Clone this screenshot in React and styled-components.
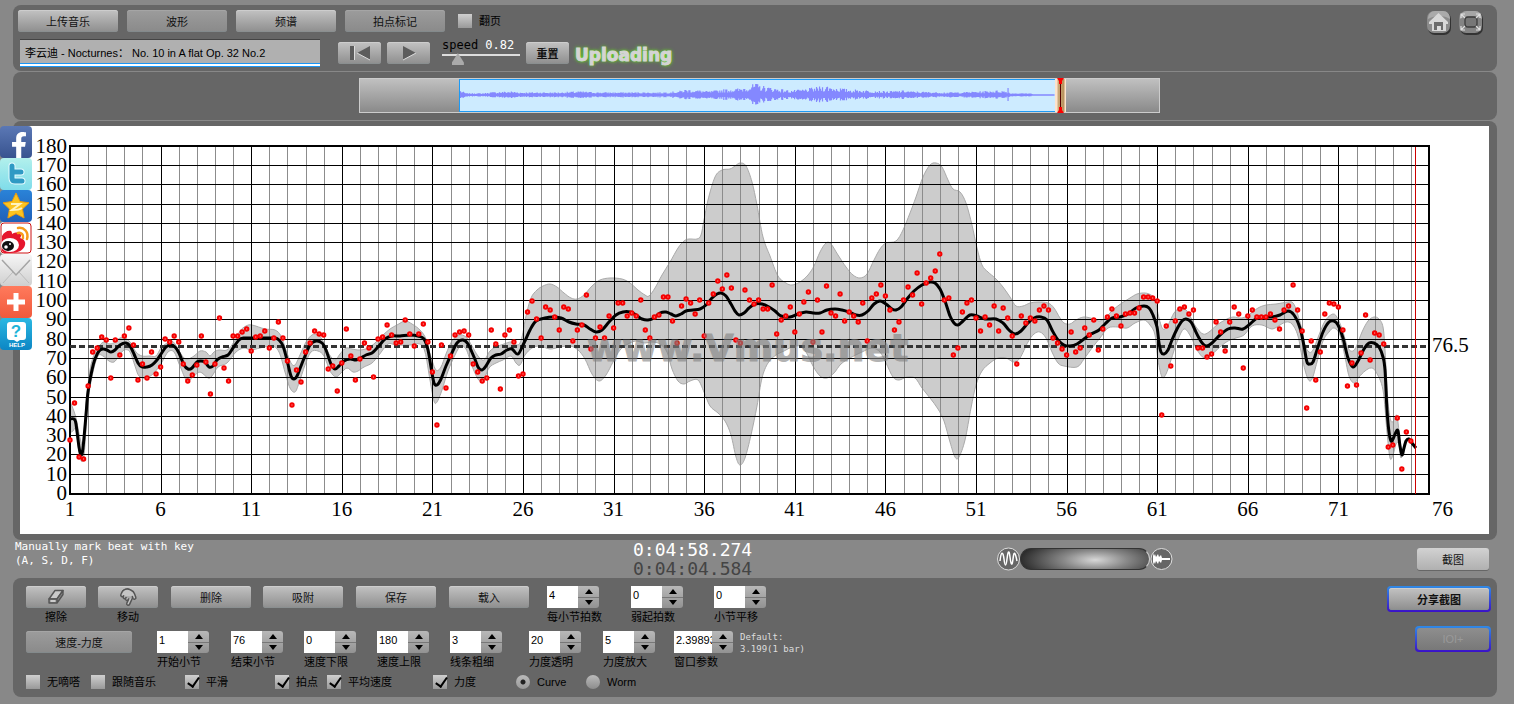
import React, { useState } from "react";
import styled, { createGlobalStyle, css } from "styled-components";
import { FaFacebookF } from "react-icons/fa";
import { Pointer } from "lucide-react";

// tempo of every beat, four beats to the bar, as a height on the chart
const beats = [
  440, 403, 457, 459, 386, 352, 348, 337, 340, 378, 340, 355, 336, 328, 345, 380, 364, 378, 352, 374,
  367, 339, 342, 336, 342, 364, 381, 375, 365, 336, 362, 394, 364, 318, 368, 381, 336, 336, 332, 329,
  351, 337, 336, 331, 348, 338, 322, 338, 361, 405, 370, 382, 352, 343, 331, 334, 335, 369, 366, 391,
  363, 329, 356, 380, 359, 343, 348, 377, 339, 337, 325, 335, 343, 342, 320, 334, 346, 334, 324, 342,
  372, 425, 345, 388, 356, 335, 332, 331, 335, 364, 372, 381, 378, 330, 344, 389, 335, 330, 342, 376,
  374, 312, 301, 319, 338, 307, 310, 317, 330, 307, 309, 341, 330, 325, 295, 349, 338, 327, 338, 316,
  328, 303, 303, 316, 313, 316, 300, 330, 338, 317, 315, 297, 297, 321, 343, 306, 299, 303, 314, 300,
  336, 303, 294, 281, 289, 275, 288, 340, 343, 290, 300, 304, 300, 309, 309, 285, 334, 320, 316, 307,
  332, 314, 302, 292, 342, 300, 332, 286, 313, 316, 294, 321, 312, 316, 322, 303, 341, 298, 294, 285,
  296, 310, 330, 322, 300, 287, 295, 273, 304, 283, 278, 271, 254, 300, 298, 355, 348, 312, 303, 300,
  318, 331, 317, 325, 306, 331, 308, 318, 336, 364, 316, 323, 318, 321, 310, 306, 310, 338, 343, 349,
  355, 332, 352, 348, 328, 335, 320, 350, 329, 317, 309, 316, 326, 314, 313, 313, 308, 297, 297, 298,
  301, 415, 326, 366, 321, 309, 307, 314, 310, 348, 348, 357, 354, 322, 332, 351, 322, 307, 314, 368,
  316, 310, 317, 317, 317, 314, 320, 329, 310, 306, 285, 310, 331, 408, 341, 380, 352, 314, 303, 304,
  307, 330, 386, 363, 385, 353, 315, 360, 333, 335, 344, 447, 445, 418, 469, 432, 441,
];

// x, y, x, y ...
const curve = [
  70, 419, 74, 419, 76, 424, 79, 447, 81, 455, 83, 448, 86, 415, 88, 392, 92, 370, 95, 359, 99, 351,
  103, 349, 107, 350, 111, 352, 115, 350, 120, 345, 126, 343, 130, 346, 134, 354, 138, 363, 142, 367,
  147, 367, 152, 365, 157, 360, 161, 354, 166, 347, 171, 345, 175, 347, 179, 353, 184, 365, 188, 369,
  192, 368, 197, 362, 201, 361, 205, 362, 209, 367, 213, 366, 217, 360, 222, 357, 228, 355, 233, 348,
  239, 340, 244, 338, 251, 338, 265, 338, 275, 338, 279, 340, 283, 346, 287, 360, 291, 376, 294, 379,
  297, 376, 301, 366, 305, 356, 310, 345, 316, 341, 322, 343, 326, 350, 331, 364, 335, 369, 339, 366,
  344, 361, 350, 359, 356, 360, 361, 358, 366, 355, 372, 353, 378, 347, 385, 339, 392, 336, 400, 336,
  410, 335, 418, 336, 424, 339, 428, 350, 432, 373, 434, 383, 437, 385, 441, 379, 446, 366, 451, 355,
  457, 343, 463, 340, 468, 344, 474, 357, 478, 367, 482, 370, 486, 366, 491, 358, 496, 355, 501, 354,
  507, 350, 512, 349, 518, 354, 524, 343, 530, 330, 536, 321, 545, 318, 553, 317, 561, 318, 569, 322,
  576, 324, 584, 325, 590, 329, 596, 332, 602, 330, 609, 322, 616, 315, 623, 312, 630, 312, 636, 315,
  642, 319, 648, 320, 654, 318, 660, 313, 666, 312, 671, 314, 676, 316, 681, 314, 686, 311, 693, 310,
  700, 309, 706, 305, 712, 298, 717, 294, 721, 293, 726, 296, 731, 304, 735, 311, 739, 315, 744, 313,
  749, 308, 755, 304, 762, 304, 769, 307, 775, 311, 781, 316, 790, 317, 798, 314, 806, 312, 813, 313,
  820, 313, 827, 310, 835, 309, 842, 310, 849, 312, 856, 315, 862, 315, 868, 311, 874, 304, 880, 301,
  886, 304, 892, 309, 896, 310, 901, 307, 907, 299, 914, 291, 922, 285, 930, 282, 935, 283, 940, 289,
  945, 301, 950, 316, 954, 323, 958, 325, 963, 321, 970, 315, 977, 316, 985, 319, 996, 319, 1003, 323,
  1009, 330, 1015, 334, 1021, 331, 1028, 323, 1034, 318, 1041, 317, 1047, 320, 1052, 330, 1058, 340,
  1064, 345, 1070, 346, 1077, 344, 1084, 339, 1091, 334, 1099, 330, 1105, 324, 1112, 318, 1120, 317,
  1128, 314, 1136, 308, 1144, 306, 1149, 308, 1153, 315, 1157, 327, 1159, 343, 1161, 352, 1164, 354,
  1168, 350, 1172, 340, 1177, 329, 1182, 321, 1186, 319, 1191, 322, 1195, 330, 1199, 338, 1203, 344,
  1207, 346, 1212, 343, 1220, 335, 1228, 329, 1235, 328, 1243, 329, 1250, 324, 1257, 318, 1264, 317,
  1272, 317, 1280, 315, 1288, 311, 1294, 315, 1300, 328, 1304, 346, 1307, 362, 1310, 364, 1313, 362,
  1317, 350, 1323, 332, 1329, 322, 1334, 321, 1338, 325, 1343, 338, 1348, 358, 1353, 367, 1358, 361,
  1364, 349, 1369, 343, 1374, 343, 1379, 347, 1383, 357, 1385, 370, 1387, 410, 1389, 432, 1391, 441,
  1393, 439, 1396, 432, 1398, 431, 1400, 446, 1402, 455, 1404, 448, 1406, 441, 1409, 439, 1412, 443,
  1416, 448,
];

const loud = [
  70, 402, 72, 406, 76, 418, 80, 438, 83, 443, 86, 405, 90, 370, 95, 352, 100, 345, 104, 342, 110, 344,
  115, 342, 120, 338, 125, 338, 130, 342, 136, 352, 142, 356, 150, 356, 156, 356, 161, 348, 167, 343,
  172, 341, 177, 347, 183, 357, 188, 359, 194, 356, 200, 351, 206, 352, 210, 356, 214, 352, 219, 350,
  227, 350, 234, 342, 240, 331, 246, 326, 252, 325, 265, 329, 275, 330, 281, 336, 286, 350, 291, 363,
  295, 365, 300, 355, 306, 342, 312, 335, 318, 335, 323, 341, 329, 354, 335, 360, 340, 354, 346, 348,
  352, 349, 360, 350, 368, 348, 375, 343, 383, 335, 390, 329, 397, 325, 405, 321, 412, 324, 420, 330,
  426, 339, 431, 357, 436, 370, 441, 367, 446, 354, 452, 341, 459, 335, 466, 337, 472, 346, 478, 356,
  484, 360, 490, 351, 496, 347, 504, 344, 511, 342, 518, 345, 522, 337, 526, 316, 531, 298, 537, 290,
  543, 286, 550, 284, 557, 287, 564, 293, 571, 298, 577, 299, 584, 295, 592, 286, 600, 280, 610, 278,
  622, 279, 630, 283, 638, 290, 645, 295, 649, 296, 655, 288, 662, 275, 670, 262, 678, 248, 684, 241,
  689, 239, 697, 239, 701, 235, 704, 220, 708, 200, 715, 177, 722, 170, 730, 169, 735, 166, 740, 163,
  746, 166, 752, 182, 757, 205, 763, 237, 770, 256, 778, 276, 786, 283, 792, 285, 800, 282, 808, 275,
  814, 266, 820, 252, 826, 243, 831, 244, 838, 255, 846, 267, 853, 275, 860, 278, 867, 274, 874, 260,
  880, 249, 886, 243, 896, 241, 903, 230, 910, 213, 916, 197, 923, 177, 930, 165, 936, 163, 942, 167,
  948, 180, 953, 189, 960, 192, 966, 203, 972, 225, 977, 248, 982, 265, 988, 272, 995, 278, 1003, 287,
  1010, 297, 1016, 306, 1023, 306, 1030, 303, 1038, 302, 1048, 303, 1054, 308, 1060, 318, 1064, 323,
  1070, 324, 1076, 320, 1084, 317, 1094, 319, 1100, 321, 1106, 317, 1114, 309, 1122, 303, 1130, 298,
  1137, 294, 1145, 293, 1151, 295, 1155, 300, 1159, 318, 1163, 329, 1168, 325, 1174, 313, 1180, 308,
  1186, 310, 1191, 318, 1196, 327, 1203, 334, 1209, 332, 1217, 325, 1225, 320, 1233, 317, 1242, 318,
  1250, 314, 1258, 308, 1266, 305, 1276, 304, 1288, 302, 1293, 303, 1297, 312, 1302, 330, 1305, 345,
  1309, 352, 1313, 350, 1319, 335, 1325, 321, 1333, 314, 1338, 319, 1343, 332, 1348, 348, 1353, 351,
  1357, 345, 1362, 332, 1368, 321, 1374, 317, 1379, 319, 1383, 327, 1385, 350, 1388, 402, 1391, 421,
  1394, 420, 1397, 416, 1400, 441, 1402, 451, 1405, 442, 1409, 438, 1416, 448,
];

const soft = [
  70, 433, 73, 431, 76, 430, 80, 458, 84, 455, 88, 402, 93, 372, 98, 356, 103, 356, 109, 361, 114, 362,
  119, 356, 124, 350, 130, 352, 135, 366, 139, 376, 146, 378, 154, 373, 162, 362, 168, 352, 174, 352,
  180, 366, 187, 381, 193, 377, 200, 372, 208, 378, 212, 376, 218, 367, 227, 363, 236, 352, 244, 348,
  251, 350, 260, 348, 272, 346, 279, 352, 285, 372, 290, 388, 295, 392, 299, 383, 305, 365, 311, 352,
  318, 351, 324, 356, 330, 371, 336, 377, 341, 373, 347, 368, 353, 372, 358, 371, 364, 367, 372, 363,
  379, 355, 388, 344, 396, 345, 410, 345, 420, 344, 425, 352, 430, 380, 434, 401, 437, 402, 442, 390,
  448, 371, 455, 355, 460, 347, 466, 349, 472, 366, 478, 379, 483, 381, 489, 368, 496, 363, 503, 360,
  511, 356, 516, 363, 520, 365, 525, 355, 532, 348, 540, 346, 550, 349, 560, 347, 570, 346, 578, 350,
  585, 359, 592, 374, 599, 381, 606, 375, 613, 362, 620, 350, 628, 344, 636, 341, 644, 343, 652, 342,
  660, 344, 667, 352, 672, 369, 678, 381, 684, 384, 690, 381, 698, 380, 704, 392, 710, 406, 718, 413,
  725, 421, 731, 435, 736, 457, 740, 465, 745, 458, 751, 435, 757, 406, 762, 378, 768, 363, 776, 355,
  784, 351, 792, 347, 800, 346, 806, 352, 813, 366, 820, 376, 827, 378, 834, 373, 841, 364, 850, 358,
  862, 352, 872, 348, 880, 352, 886, 363, 893, 377, 899, 380, 907, 377, 915, 378, 922, 388, 930, 398,
  938, 409, 944, 421, 950, 442, 955, 457, 959, 457, 965, 440, 971, 408, 976, 385, 982, 371, 990, 363,
  998, 358, 1006, 358, 1014, 362, 1020, 358, 1028, 342, 1034, 334, 1040, 332, 1046, 338, 1052, 352,
  1058, 363, 1064, 366, 1077, 367, 1084, 359, 1092, 348, 1100, 338, 1108, 328, 1118, 327, 1127, 328,
  1135, 323, 1144, 320, 1150, 325, 1155, 335, 1158, 360, 1162, 377, 1166, 374, 1171, 360, 1177, 342,
  1184, 329, 1191, 337, 1197, 350, 1204, 358, 1210, 356, 1220, 347, 1228, 341, 1236, 338, 1244, 335,
  1252, 326, 1262, 325, 1272, 329, 1280, 325, 1286, 322, 1292, 324, 1298, 336, 1303, 362, 1308, 379,
  1312, 379, 1317, 362, 1323, 341, 1329, 332, 1334, 328, 1340, 335, 1345, 357, 1349, 376, 1354, 383,
  1359, 377, 1365, 371, 1371, 368, 1376, 372, 1383, 390, 1387, 432, 1390, 458, 1393, 455, 1396, 444,
  1399, 444, 1401, 458, 1405, 446, 1409, 440, 1416, 448,
];

const pairs = (flat) => {
  const out = [];
  for (let i = 0; i < flat.length; i += 2) out.push([flat[i], flat[i + 1]]);
  return out;
};

const smooth = (pts) => {
  let d = "";
  for (let i = 0; i < pts.length - 1; i++) {
    const p0 = pts[i - 1] || pts[i];
    const p1 = pts[i];
    const p2 = pts[i + 1];
    const p3 = pts[i + 2] || p2;
    const c1 = [p1[0] + (p2[0] - p0[0]) / 6, p1[1] + (p2[1] - p0[1]) / 6];
    const c2 = [p2[0] - (p3[0] - p1[0]) / 6, p2[1] - (p3[1] - p1[1]) / 6];
    d += `C${c1[0].toFixed(1)} ${c1[1].toFixed(1)} ${c2[0].toFixed(1)} ${c2[1].toFixed(1)} ${p2[0]} ${p2[1]}`;
  }
  return d;
};

const linePath = (flat) => `M${flat[0]} ${flat[1]}${smooth(pairs(flat))}`;

const bandPath = () => {
  const back = pairs(soft).reverse();
  return `${linePath(loud)}L${back[0][0]} ${back[0][1]}${smooth(back)}Z`;
};

const barX = (bar) => 70 + (bar - 1) * 18.12;
const bpmY = (bpm) => 494 - bpm * 1.93;

const range = (from, to, step) => {
  const out = [];
  for (let n = from; n <= to; n += step) out.push(n);
  return out;
};

const TempoChart = () => (
  <ChartSvg viewBox="20 126 1469 408" role="img" aria-label="tempo curve">
    <path d={bandPath()} fill="#cccccc" stroke="#aaaaaa" />
    <g shapeRendering="crispEdges">
      {range(1, 76, 1).map((bar) => (
        <line
          key={bar}
          x1={Math.round(barX(bar)) + 0.5}
          x2={Math.round(barX(bar)) + 0.5}
          y1="147"
          y2="494"
          stroke={bar % 5 === 1 ? "#000" : "#8c8c8c"}
        />
      ))}
      {range(0, 180, 10).map((bpm) => (
        <line
          key={bpm}
          x1="70"
          x2="1429"
          y1={Math.round(bpmY(bpm)) - 0.5}
          y2={Math.round(bpmY(bpm)) - 0.5}
          stroke="#000"
        />
      ))}
      <rect x="70" y="146" width="1359" height="348" fill="none" stroke="#000" strokeWidth="2" />
    </g>
    <line x1="70" x2="1429" y1="346.5" y2="346.5" stroke="#333" strokeWidth="3" strokeDasharray="6 3" />
    <path d={linePath(curve)} fill="none" stroke="#000" strokeWidth="3" strokeLinejoin="round" />
    {beats.map((y, i) => (
      <circle key={i} cx={70 + i * 4.53} cy={y} r="1.7" fill="#ff8080" stroke="#f50000" strokeWidth="2" />
    ))}
    <line x1="1415.5" x2="1415.5" y1="147" y2="494" stroke="#c00" shapeRendering="crispEdges" />
    <Watermark x="587" y="361">www.Vmus.net</Watermark>
    {range(0, 180, 10).map((bpm) => (
      <AxisText key={bpm} x="67" y={Math.round(bpmY(bpm)) + 6} textAnchor="end">{bpm}</AxisText>
    ))}
    {range(1, 71, 5).map((bar) => (
      <AxisText key={bar} x={barX(bar)} y="516" textAnchor="middle">{bar}</AxisText>
    ))}
    <AxisText x="1432" y="516">76</AxisText>
    <AxisText x="1432" y="352">76.5</AxisText>
  </ChartSvg>
);

// loudness envelope of the recording: [x, half height]
const envelope = [
  [0, 4], [6, 1], [24, 1], [30, 2], [50, 3], [60, 2], [100, 2], [118, 3], [140, 2], [200, 2], [218, 3],
  [226, 5], [240, 4], [250, 3], [262, 5], [280, 6], [296, 11], [306, 8], [318, 6], [330, 4], [344, 5],
  [366, 9], [376, 7], [390, 5], [410, 4], [430, 3], [445, 4], [452, 3], [480, 2], [500, 2], [540, 4],
  [548, 3], [552, 1], [572, 1], [574, 0], [596, 0],
];

const wavePath = () => {
  let d = "";
  let seed = 7;
  let k = 0;
  for (let x = 0; x < 596; x++) {
    while (envelope[k + 1][0] < x) k++;
    const [x0, a0] = envelope[k];
    const [x1, a1] = envelope[k + 1];
    const amp = a0 + ((a1 - a0) * (x - x0)) / (x1 - x0);
    seed = (seed * 1103515245 + 12345) % 2147483648;
    const h = 0.8 + amp * (0.3 + (0.7 * seed) / 2147483648);
    d += `M${x + 0.5} ${(15 - h).toFixed(1)}V${(15 + h * 0.85).toFixed(1)}`;
  }
  return `${d}M549.5 8V21`;
};

const EraserIcon = () => (
  <svg width="18" height="16" viewBox="0 0 18 16" fill="none" stroke="#555" strokeWidth="1.4" strokeLinejoin="round">
    <path d="M8 1.500h8L10 10H2z" fill="#c9c9c9" />
    <path d="M2 10h8v4H2zM16 1.500L10 10v4l6-8.500z" fill="#8a8a8a" />
    <path d="M3.500 11h5v2h-5z" fill="#ccc" stroke="none" />
  </svg>
);

const HomeIcon = () => (
  <svg width="26" height="26" viewBox="0 0 26 26">
    <rect x="2" y="2" width="23" height="23" rx="7" fill="#333" />
    <rect x="1" y="1" width="23" height="22" rx="7" fill="#8b8b8b" />
    <path d="M2 9c0-5 3-8 7-8h8c4 0 7 3 7 8-6-4-15-4-22 0z" fill="#aaa" />
    <path d="M12.500 3L22 12v2h-2v7H6v-7H3v-2z" fill="#d8d8d8" />
    <path d="M8 12h9v8h-2v-4h-4v4H8z" fill="#6c6c6c" />
    <path d="M11 16h3v5h-3z" fill="#ddd" />
  </svg>
);

const FullIcon = () => (
  <svg width="26" height="26" viewBox="0 0 26 26">
    <rect x="2" y="2" width="23" height="23" rx="7" fill="#333" />
    <rect x="1" y="1" width="23" height="22" rx="7" fill="#848484" />
    <path d="M2 9c0-5 3-8 7-8h8c4 0 7 3 7 8-6-4-15-4-22 0z" fill="#a6a6a6" />
    <rect x="7" y="7" width="12" height="10" rx="3" fill="#777" stroke="#3c3c3c" strokeWidth="1.300" />
    <path d="M3 8V4h4M3 4l4 4M22 8V4h-4M22 4l-4 4M3 16v4h4M3 20l4-4M22 16v4h-4M22 20l-4-4" fill="none" stroke="#ddd" strokeWidth="1.200" />
  </svg>
);

const TwitterIcon = () => (
  <svg width="32" height="32" viewBox="0 0 32 32" fill="none" strokeLinecap="round" strokeLinejoin="round">
    <path d="M12 8v12c0 2 1 3 3 3h7M12 14h9" stroke="#e6fbff" strokeWidth="7" />
    <path d="M12 8v12c0 2 1 3 3 3h7M12 14h9" stroke="#2f9ac4" strokeWidth="5" />
  </svg>
);

const QzoneIcon = () => (
  <svg width="32" height="32" viewBox="0 0 32 32">
    <path d="M16 3l4 8.500 9 1.300-6.500 6.200 1.600 9L16 23.700 7.900 28l1.600-9L3 12.800l9-1.300z" fill="#fcc420" stroke="#e89a10" />
    <path d="M11 14h9l-8 6c4 0 7 0 10-2" fill="none" stroke="#fff3c0" strokeWidth="2" />
  </svg>
);

const WeiboIcon = () => (
  <svg width="32" height="32" viewBox="0 0 32 32">
    <rect x="1" y="1" width="30" height="30" rx="3" fill="#fff" stroke="#c11" />
    <path d="M2 14c2-4 6-6 9-5 1 1 1 2 1 3 4-2 8-2 9 1 0 1 0 2-1 3 4 1 6 4 5 7-1 5-7 8-14 8H4l-2-2z" fill="#e6162d" />
    <ellipse cx="10" cy="23" rx="9" ry="7" fill="#fff" />
    <ellipse cx="8" cy="24" rx="6" ry="5" fill="#111" />
    <circle cx="6" cy="25" r="1.800" fill="#fff" />
    <circle cx="10" cy="22" r="1" fill="#fff" />
    <path d="M18 6c6-1 11 4 9 11M18 11c3-1 6 2 5 5" fill="none" stroke="#f79a1c" strokeWidth="2.500" strokeLinecap="round" />
  </svg>
);

const MailIcon = () => (
  <svg width="32" height="32" viewBox="0 0 32 32" fill="none">
    <path d="M3 29l10-11M29 29L19 18" stroke="#bbb" />
    <path d="M2 6l14 15L30 6" stroke="#a5a5a5" strokeWidth="1.500" />
  </svg>
);

const PlusIcon = () => (
  <svg width="32" height="32" viewBox="0 0 32 32">
    <path d="M13.500 7h5v6.500H25v5h-6.500V25h-5v-6.500H7v-5h6.500z" fill="#fff" />
  </svg>
);

const HelpIcon = () => (
  <svg width="32" height="32" viewBox="0 0 32 32">
    <path d="M10 4h13a3 3 0 013 3v12a3 3 0 01-3 3h-3l-3 2-3-2h-4a3 3 0 01-3-3V7a3 3 0 013-3z" fill="#fff" />
    <text x="16" y="19" textAnchor="middle" fontFamily="Liberation Sans, sans-serif" fontSize="17" fontWeight="bold" fill="#1fb4d8">?</text>
    <text x="17" y="29" textAnchor="middle" fontFamily="Liberation Sans, sans-serif" fontSize="6" fontWeight="bold" fill="#fff">HELP</text>
  </svg>
);

const shares = [
  { name: "Facebook", top: "#5b78b5", bottom: "#38538f", icon: <FaFacebookF size={26} color="#fff" /> },
  { name: "Twitter", top: "#b2f0ec", bottom: "#7fdcea", icon: <TwitterIcon /> },
  { name: "Qzone", top: "#2a83d8", bottom: "#2060b8", icon: <QzoneIcon /> },
  { name: "Weibo", top: "#ffffff", bottom: "#ffffff", icon: <WeiboIcon /> },
  { name: "Mail", top: "#f6f6f6", bottom: "#cfcfcf", icon: <MailIcon /> },
  { name: "More", top: "#ff7a5c", bottom: "#f0593c", icon: <PlusIcon /> },
  { name: "Help", top: "#2ab8e2", bottom: "#0c86c4", icon: <HelpIcon /> },
];

const Check = ({ label, checked }) => (
  <Tick>
    <Box type="checkbox" defaultChecked={checked} />
    {label}
  </Tick>
);

const Stepper = ({ label, start, wide }) => {
  const [value, setValue] = useState(start);
  const step = (by) => setValue(String(Number(value) + by));
  return (
    <Field $left>
      <Spin>
        <NumberBox $wide={wide} aria-label={label} value={value} onChange={(e) => setValue(e.target.value)} />
        <Arrows>
          <Arrow type="button" aria-label={`${label} +`} onClick={() => step(1)}>
            <svg width="8" height="5" viewBox="0 0 8 5"><path d="M0 5l4-5 4 5z" /></svg>
          </Arrow>
          <Arrow type="button" aria-label={`${label} -`} onClick={() => step(-1)}>
            <svg width="8" height="5" viewBox="0 0 8 5"><path d="M0 0l4 5 4-5z" /></svg>
          </Arrow>
        </Arrows>
      </Spin>
      <Caption>{label}</Caption>
    </Field>
  );
};

const App = () => {
  const [mode, setMode] = useState("curve");

  return (
    <Page>
      <GlobalStyle />

      <TopPanel>
        <Tools>
          <ButtonRow>
            <Button $w={100}>上传音乐</Button>
            <Button $w={100} $dim>波形</Button>
            <Button $w={100}>频谱</Button>
            <Button $w={100} $dim>拍点标记</Button>
            <FlipWrap><Check label="翻页" /></FlipWrap>
          </ButtonRow>
          <PlayRow>
            <Track>
              <TrackName aria-label="track" defaultValue="李云迪 - Nocturnes： No. 10 in A flat Op. 32 No.2" />
              <TrackLoaded />
            </Track>
            <Button $w={43} aria-label="back to start">
              <svg width="22" height="18" viewBox="0 0 22 18"><path d="M1 2h4v14H1zM21 2v14L8 9z" fill="#5c5c5c" /><path d="M5.500 2v14M8 9l13 7" stroke="#ddd" fill="none" /></svg>
            </Button>
            <Button $w={43} aria-label="play">
              <svg width="18" height="18" viewBox="0 0 18 18"><path d="M3 2v14l13-7z" fill="#5c5c5c" /><path d="M3 16l13-7" stroke="#ddd" /></svg>
            </Button>
            <Speed>
              <SpeedLabel htmlFor="speed">speed <b>0.82</b></SpeedLabel>
              <SpeedRange id="speed" type="range" min="0.7" max="1.5" step="0.01" defaultValue="0.82" />
            </Speed>
            <Button $w={43} $bold>重置</Button>
            <Uploading>Uploading</Uploading>
          </PlayRow>
        </Tools>
        <Corner>
          <IconButton aria-label="home"><HomeIcon /></IconButton>
          <IconButton aria-label="full screen"><FullIcon /></IconButton>
        </Corner>
      </TopPanel>

      <WavePanel>
        <WaveSpace $grow={337} />
        <Overview>
          <Outside $grow={100} />
          <Selection>
            <svg width="100%" height="31" viewBox="0 0 596 31" preserveAspectRatio="none">
              <path d={wavePath()} stroke="#8488ff" strokeWidth="1.2" fill="none" />
            </svg>
          </Selection>
          <Handle>
            <svg width="11" height="35" viewBox="0 0 11 35">
              <path d="M5.500 0v35" stroke="#500" />
              <path d="M2 0h7l-2 3v3H4V3zM2 35h7l-2-3v-3H4v3z" fill="#f00" />
            </svg>
          </Handle>
          <Outside $grow={94} />
        </Overview>
        <WaveSpace $grow={328} />
      </WavePanel>

      <ChartPanel>
        <TempoChart />
      </ChartPanel>

      <Status>
        <Hint>Manually mark beat with key<br />(A, S, D, F)</Hint>
        <Clock>0:04:58.274<span>0:04:04.584</span></Clock>
        <Zoom>
          <svg width="23" height="24" viewBox="0 0 23 24" fill="#666" stroke="#ddd">
            <circle cx="11.500" cy="12" r="11" />
            <path d="M3 14C4 4 6 4 7 12s2 8 3 0 2-10 3-2 2 10 3 2 2-8 4 2" fill="none" stroke="#fff" strokeWidth="1.500" />
          </svg>
          <ZoomRange type="range" aria-label="zoom" />
          <svg width="23" height="24" viewBox="0 0 23 24" fill="#666" stroke="#ddd">
            <circle cx="11.500" cy="12" r="10.500" />
            <path d="M3 6l1 3 1-2 1 3 2-3 1 3 2-2 1 3h8v2h-8l-1 3-2-2-1 3-2-3-1 3-1-2-1 3z" fill="#fff" stroke="none" />
          </svg>
        </Zoom>
        <Button $w={72} $light>截图</Button>
      </Status>

      <BottomPanel>
        <Settings>
          <Row $cols="72px 73px 92px 93px 93px 98px 84px 83px 52px">
            <Field>
              <Button $w={60} aria-label="擦除"><EraserIcon /></Button>
              <Caption>擦除</Caption>
            </Field>
            <Field>
              <Button $w={60} aria-label="移动"><HandIcon size={18} /></Button>
              <Caption>移动</Caption>
            </Field>
            <Button $w={80}>删除</Button>
            <Button $w={80}>吸附</Button>
            <Button $w={80}>保存</Button>
            <Button $w={80}>载入</Button>
            <Stepper label="每小节拍数" start="4" />
            <Stepper label="弱起拍数" start="0" />
            <Stepper label="小节平移" start="0" />
          </Row>
          <Row $cols="131px 74px 73px 73px 73px 79px 74px 71px 66px 90px">
            <Button $w={106} $dim>速度-力度</Button>
            <Stepper label="开始小节" start="1" />
            <Stepper label="结束小节" start="76" />
            <Stepper label="速度下限" start="0" />
            <Stepper label="速度上限" start="180" />
            <Stepper label="线条粗细" start="3" />
            <Stepper label="力度透明" start="20" />
            <Stepper label="力度放大" start="5" />
            <Stepper label="窗口参数" start="2.39893" wide />
            <Default>Default:<br />3.199(1 bar)</Default>
          </Row>
          <Row $cols="65px 94px 90px 52px 106px 83px 70px 60px">
            <Check label="无嘀嗒" />
            <Check label="跟随音乐" />
            <Check label="平滑" checked />
            <Check label="拍点" checked />
            <Check label="平均速度" checked />
            <Check label="力度" checked />
            <Tick>
              <Dot type="radio" name="mode" checked={mode === "curve"} onChange={() => setMode("curve")} />
              Curve
            </Tick>
            <Tick>
              <Dot type="radio" name="mode" checked={mode === "worm"} onChange={() => setMode("worm")} />
              Worm
            </Tick>
          </Row>
        </Settings>
        <ShareColumn>
          <Ring><Button $w={100} $bold>分享截图</Button></Ring>
          <Ring><Button $w={72} disabled>IOI+</Button></Ring>
        </ShareColumn>
      </BottomPanel>

      <ShareBar>
        {shares.map((s) => (
          <ShareLink key={s.name} href="#" aria-label={s.name} $top={s.top} $bottom={s.bottom} $low={s.name === "Facebook"}>
            {s.icon}
          </ShareLink>
        ))}
      </ShareBar>
    </Page>
  );
};

const sans = `"Liberation Sans", "Noto Sans CJK SC", sans-serif`;
const mono = `"DejaVu Sans Mono", monospace`;

const GlobalStyle = createGlobalStyle`
  * {
    box-sizing: border-box;
  }
  body {
    margin: 0;
    background: #888;
    color: #000;
    font-family: ${sans};
    font-size: 11px;
  }
  button, input {
    font-family: inherit;
    font-size: 11px;
    margin: 0;
  }
`;

const Page = styled.div`
  position: relative;
  min-width: 1200px;
  padding: 5px 17px 7px 13px;
`;

const Panel = styled.section`
  background: #666;
  border-radius: 8px;
  margin-bottom: 1px;
`;

const TopPanel = styled(Panel)`
  display: flex;
  justify-content: space-between;
  height: 66px;
  padding: 5px 13px 0 5px;
`;

const Tools = styled.div`
  display: flex;
  flex-direction: column;
  gap: 7px;
`;

const ButtonRow = styled.div`
  display: flex;
  gap: 9px;
`;

const Button = styled.button`
  display: flex;
  align-items: center;
  justify-content: center;
  flex: none;
  width: ${(p) => p.$w}px;
  height: 22px;
  padding: 0;
  border: 0;
  border-radius: 3px;
  color: #111;
  font-weight: ${(p) => (p.$bold ? "bold" : "normal")};
  background: linear-gradient(#c2c2c2, #8e8e8e);
  box-shadow: inset 0 1px 0 #cdcdcd, inset 0 -1px 0 #8a8f90;

  ${(p) => p.$dim && css`
    background: linear-gradient(#9c9c9c, #8a8a8a);
    box-shadow: inset 0 1px 0 #a5a5a5, inset 0 -1px 0 #838a8c;
  `}

  ${(p) => p.$light && css`
    background: linear-gradient(#d2d2d2, #b0b0b0);
    box-shadow: 0 1px 0 #666;
  `}

  &:disabled {
    color: #999;
    background: linear-gradient(#8e8e8e, #787878);
    box-shadow: none;
  }
`;

const HandIcon = styled(Pointer)`
  fill: #c4c4c4;
  stroke: #555;
  transform: rotate(205deg);
`;

const FlipWrap = styled.div`
  display: flex;
  align-items: center;
  padding-left: 4px;
`;

const Tick = styled.label`
  display: flex;
  align-items: center;
  gap: 7px;
  height: 20px;
  line-height: 16px;
  white-space: nowrap;
`;

const Box = styled.input`
  appearance: none;
  position: relative;
  width: 14px;
  height: 14px;
  background: linear-gradient(#cfcfcf, #999);

  &:checked::after {
    content: "";
    position: absolute;
    left: 5px;
    top: 0;
    width: 5px;
    height: 10px;
    border: solid #000;
    border-width: 0 2px 2px 0;
    transform: rotate(35deg);
  }
`;

const Dot = styled.input`
  appearance: none;
  width: 14px;
  height: 14px;
  border-radius: 7px;
  background: linear-gradient(#bbb, #8c8c8c);

  &:checked {
    background: radial-gradient(circle at 7px 7px, #222 2px, transparent 3px), linear-gradient(#bbb, #999);
  }
`;

const PlayRow = styled.div`
  display: flex;
  align-items: center;
  gap: 6px;
  height: 28px;
`;

const Track = styled.div`
  width: 300px;
  margin: 0 12px 0 2px;
`;

const TrackName = styled.input`
  display: block;
  width: 100%;
  height: 24px;
  padding: 0 5px;
  border: 0;
  border-top: 1px solid #444;
  background: #b0b0b0;
`;

const TrackLoaded = styled.div`
  height: 4px;
  border: solid #1b96f5;
  border-width: 1px 0;
  background: #fff;
`;

const Speed = styled.div`
  display: flex;
  flex-direction: column;
  align-self: flex-start;
  width: 78px;
  margin-left: 6px;
`;

const SpeedLabel = styled.label`
  font: 12px/12px ${mono};
  white-space: pre;

  b {
    color: #fff;
    font-weight: normal;
  }
`;

const SpeedRange = styled.input`
  appearance: none;
  width: 100%;
  height: 16px;
  background: linear-gradient(#ddd, #ddd) 0 3px / 100% 2px no-repeat;

  &::-webkit-slider-thumb {
    appearance: none;
    width: 12px;
    height: 12px;
    background: #aaa;
    clip-path: polygon(50% 0, 100% 80%, 100% 100%, 0 100%, 0 80%);
  }
`;

const Uploading = styled.strong`
  padding-top: 4px;
  font: bold 17px/22px "DejaVu Sans", sans-serif;
  color: #d4d4d4;
  -webkit-text-stroke: 1px #d4d4d4;
  text-shadow: 0 0 3px #6d2, 0 0 4px #6d2;
`;

const Corner = styled.div`
  display: flex;
  gap: 6px;
`;

const IconButton = styled.button`
  height: 26px;
  padding: 0;
  border: 0;
  background: none;
`;

const WavePanel = styled(Panel)`
  display: flex;
  height: 48px;
  padding: 6px 9px 7px;
`;

const WaveSpace = styled.div`
  flex: ${(p) => p.$grow};
`;

const Overview = styled.div`
  display: flex;
  flex: 801;
  height: 35px;
  border: 1px solid #ccc;
`;

const Outside = styled.div`
  flex: ${(p) => p.$grow};
  background: linear-gradient(#c0c0c0, #8a8a8a);
`;

const Selection = styled.div`
  flex: 596;
  border: 1px solid #1d9af5;
  border-right: 0;
  background: #cdebff;
  overflow: hidden;

  svg {
    display: block;
  }
`;

const Handle = styled.div`
  width: 11px;
  background: linear-gradient(90deg, #fde3cc 2px, #c9a97c 3px, #b8935c 9px, #fde3cc 10px);

  svg {
    display: block;
    margin-top: -1px;
  }
`;

const ChartPanel = styled(Panel)`
  margin: 0;
  padding: 5px 8px 6px 7px;
`;

const ChartSvg = styled.svg`
  display: block;
  width: 100%;
  height: auto;
  background: #fff;
`;

const AxisText = styled.text`
  font: 21px "Liberation Serif", serif;
`;

const Watermark = styled.text`
  font: bold 38px "DejaVu Sans", sans-serif;
  fill: #808080;
  stroke: #808080;
  opacity: 0.6;
`;

const Status = styled.div`
  display: grid;
  grid-template-columns: 620fr 364fr 420fr 80px;
  align-items: center;
  height: 38px;
`;

const Hint = styled.div`
  align-self: start;
  padding-left: 2px;
  font: 11px/14px ${mono};
  color: #fff;
`;

const Clock = styled.div`
  font: 18px/19px ${mono};
  color: #fff;

  span {
    display: block;
    color: #444;
  }
`;

const Zoom = styled.div`
  display: flex;
  align-items: center;
`;

const ZoomRange = styled.input`
  appearance: none;
  width: 130px;
  height: 22px;
  border-radius: 11px;
  border: 1px solid #333;
  border-right-color: #ccc;
  background: radial-gradient(ellipse 80px 24px at 58% 55%, #d8d8d8, #888 40%, #222);

  &::-webkit-slider-thumb {
    appearance: none;
    width: 20px;
    height: 20px;
  }
`;

const BottomPanel = styled(Panel)`
  display: flex;
  justify-content: space-between;
  margin: 0;
  padding: 8px 6px 5px 13px;
`;

const Settings = styled.div`
  display: flex;
  flex-direction: column;
`;

const Row = styled.div`
  display: grid;
  grid-template-columns: ${(p) => p.$cols};
  margin-bottom: 6px;

  &:last-child {
    margin: -4px 0 0;
  }
`;

const Field = styled.div`
  display: flex;
  flex-direction: column;
  align-items: ${(p) => (p.$left ? "flex-start" : "center")};
  gap: 1px;
  justify-self: start;
`;

const Caption = styled.span`
  line-height: 16px;
  white-space: nowrap;
`;

const Spin = styled.div`
  display: flex;
`;

const NumberBox = styled.input`
  width: ${(p) => (p.$wide ? 38 : 31)}px;
  height: 22px;
  padding: 0 0 4px 2px;
  border: 0;
  background: #fff;
`;

const Arrows = styled.div`
  display: flex;
  flex-direction: column;
  width: 21px;
  height: 22px;
  border-radius: 0 3px 3px 0;
  background: linear-gradient(#b8b8b8, #929292);
`;

const Arrow = styled.button`
  display: flex;
  flex: 1;
  align-items: center;
  justify-content: center;
  padding: 0;
  border: 0;
  background: none;

  &:first-child {
    border-bottom: 1px solid #777;
  }
`;

const Default = styled.div`
  font: 9px/12px ${mono};
  color: #ddd;
  white-space: nowrap;
`;

const ShareColumn = styled.div`
  display: flex;
  flex-direction: column;
  align-items: flex-end;
  gap: 14px;
`;

const Ring = styled.div`
  padding: 2px;
  border-radius: 4px;
  background: linear-gradient(#2f8ae6, #3a12c8);
`;

const ShareBar = styled.nav`
  position: absolute;
  left: 0;
  top: 126px;
  width: 32px;
`;

const ShareLink = styled.a`
  display: flex;
  align-items: ${(p) => (p.$low ? "flex-end" : "center")};
  justify-content: ${(p) => (p.$low ? "flex-end" : "center")};
  width: 32px;
  height: 32px;
  border-radius: 4px;
  overflow: hidden;
  background: linear-gradient(${(p) => p.$top}, ${(p) => p.$bottom});
`;

export default App;
